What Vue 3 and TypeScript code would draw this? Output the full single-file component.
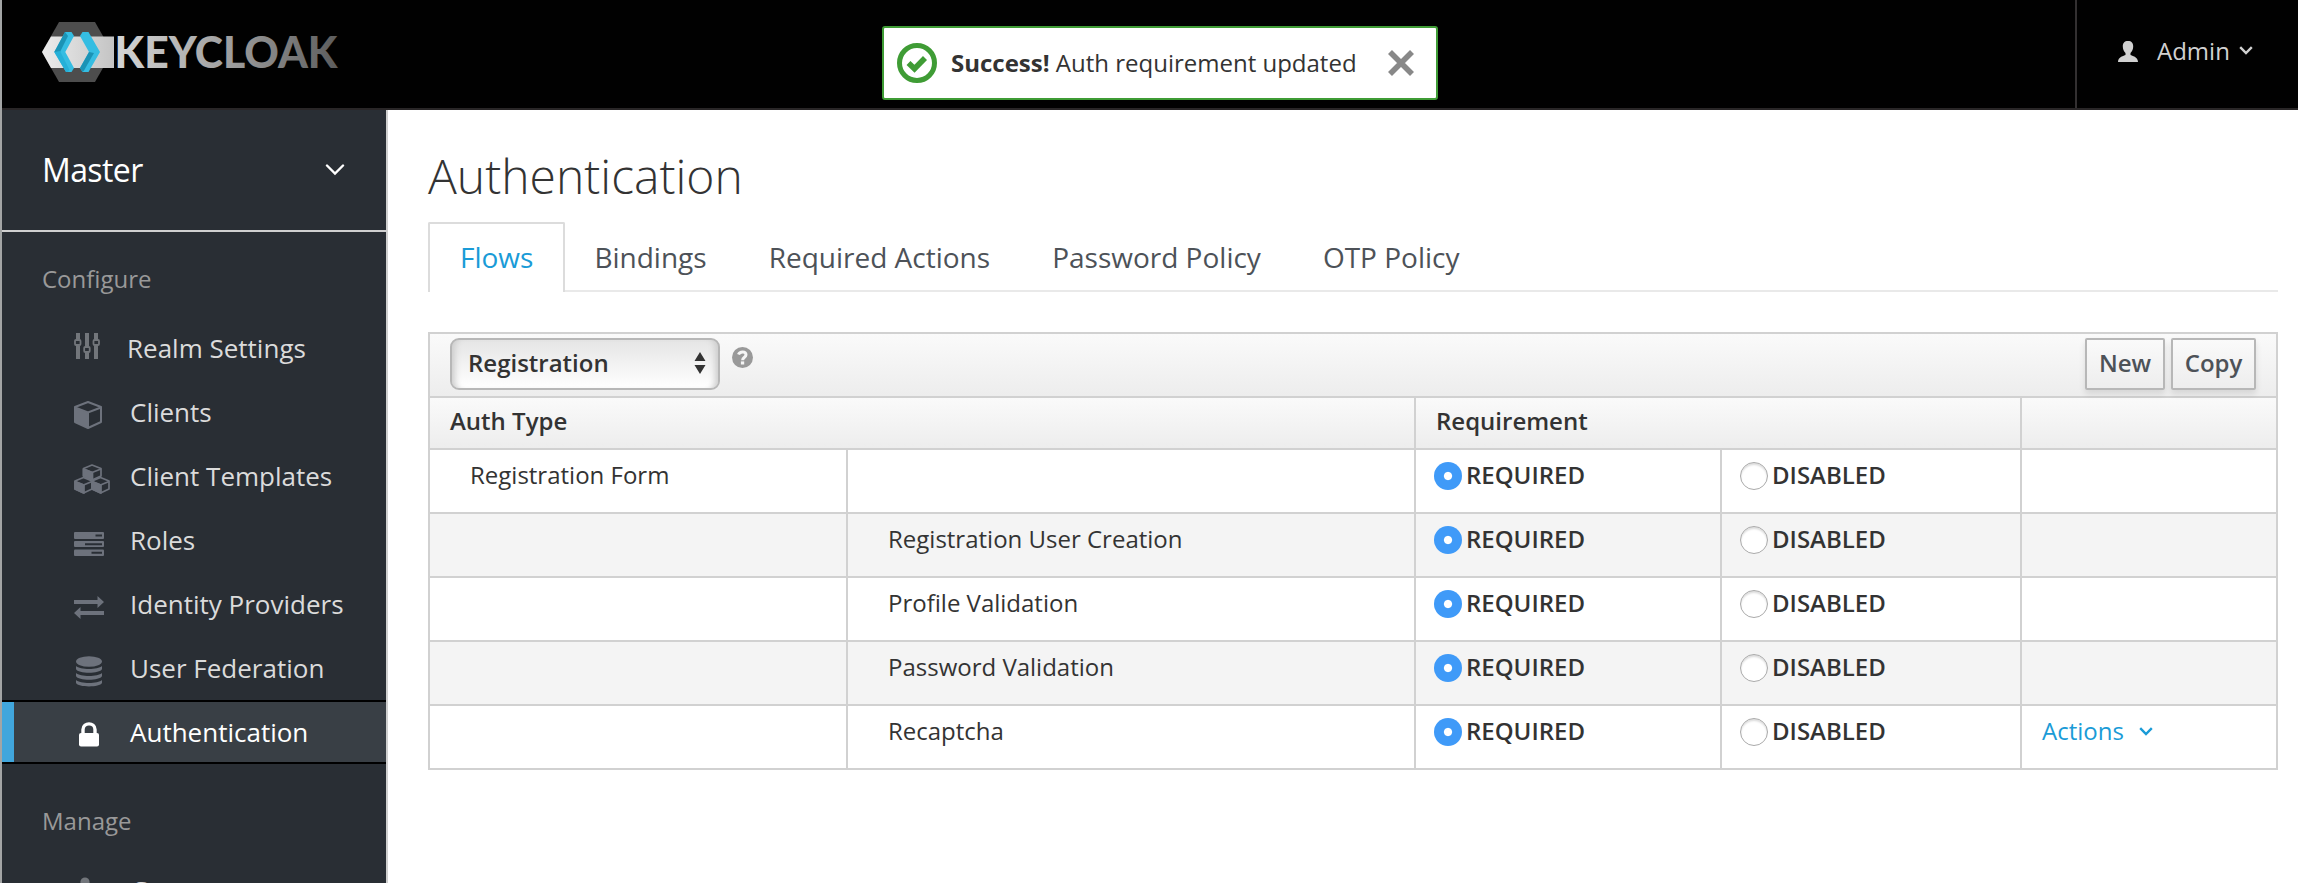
<script setup lang="ts">
interface NavItem {
  label: string
  icon: string
  active?: boolean
}

interface FlowRow {
  name: string
  level: number
  actions?: boolean
}

const configure: NavItem[] = [
  { label: 'Realm Settings', icon: 'sliders' },
  { label: 'Clients', icon: 'cube' },
  { label: 'Client Templates', icon: 'cubes' },
  { label: 'Roles', icon: 'tasks' },
  { label: 'Identity Providers', icon: 'exchange' },
  { label: 'User Federation', icon: 'database' },
  { label: 'Authentication', icon: 'lock', active: true },
]

const tabs: string[] = ['Flows', 'Bindings', 'Required Actions', 'Password Policy', 'OTP Policy']

const rows: FlowRow[] = [
  { name: 'Registration Form', level: 0 },
  { name: 'Registration User Creation', level: 1 },
  { name: 'Profile Validation', level: 1 },
  { name: 'Password Validation', level: 1 },
  { name: 'Recaptcha', level: 1, actions: true },
]
</script>

<template>
  <div class="page">
    <header class="topbar">
      <svg class="logo" width="300" height="62" viewBox="0 0 300 62">
        <defs>
          <linearGradient id="word" x1="0" x2="1" y1="0" y2="0">
            <stop offset="0" stop-color="#d6d6d6" />
            <stop offset="0.5" stop-color="#a0a0a0" />
            <stop offset="1" stop-color="#5c5c5c" />
          </linearGradient>
          <linearGradient id="band" x1="0" x2="1" y1="0" y2="0">
            <stop offset="0" stop-color="#ececec" />
            <stop offset="1" stop-color="#c4c4c4" />
          </linearGradient>
        </defs>
        <path d="M17 1H53L70 31L53 61H17L0 31Z" fill="#4d4d4d" />
        <path d="M9 15.500H72V47H9L0 31Z" fill="url(#band)" />
        <path d="M23 11H29.500L32 15L23.300 31L32 47L29.500 51H24L12.300 31Z" fill="#35bde2" />
        <path d="M23 11L26 15L18 31H12.300Z" fill="#1b93b5" />
        <path d="M12.300 31L18 30L27.500 49L26 51H24Z" fill="#25b0d8" />
        <path d="M40.500 11H46.500L58 31L46.500 51H40.500L38 47L47 31L38 15Z" fill="#35bde2" />
        <path d="M47 31L52 32L42 49.500L40.500 51L38 47Z" fill="#1b93b5" />
        <text class="logo-text" x="72.500" y="46.500" textLength="223" lengthAdjust="spacingAndGlyphs" fill="url(#word)">KEYCLOAK</text>
      </svg>
      <div class="user">
        <svg width="20" height="21" viewBox="0 0 20 21" fill="#d1d1d1">
          <path d="M10 0C13.500 0 15.300 2 15.200 5.500C15.200 8.500 14 10.500 12.500 12V14C14 15 20 15.500 20 21H0C0 15.500 6 15 7.500 14V12C6 10.500 4.800 8.500 4.800 5.500C4.700 2 6.500 0 10 0Z" />
        </svg>
        <span class="user-name">Admin</span>
        <svg class="user-caret" width="14" height="9" viewBox="0 0 14 9"><path d="M1.200 1.200L7 7L12.800 1.200" fill="none" stroke="#d1d1d1" stroke-width="2.400" /></svg>
      </div>
    </header>

    <div class="toast">
      <svg width="40" height="40" viewBox="0 0 40 40">
        <circle cx="20" cy="20" r="17.500" fill="none" stroke="#3f9c35" stroke-width="5" />
        <path d="M11.500 20L17.500 25.800L28 15" fill="none" stroke="#3f9c35" stroke-width="5.600" />
      </svg>
      <span class="toast-text"><strong>Success!</strong> Auth requirement updated</span>
      <svg class="toast-close" width="26" height="26" viewBox="0 0 26 26"><path d="M2 2L24 24M24 2L2 24" stroke="#888" stroke-width="5.600" /></svg>
    </div>

    <div class="body">
      <nav class="sidebar">
        <div class="realm">
          <span>Master</span>
          <svg width="20" height="12" viewBox="0 0 20 12"><path d="M2 1.500L10 9.500L18 1.500" fill="none" stroke="#fff" stroke-width="2.400" stroke-linecap="round" /></svg>
        </div>
        <h2 class="section">Configure</h2>
        <ul class="nav">
          <li v-for="item in configure" :key="item.label" :class="['nav-item', item.icon, { active: item.active }]">
            <span class="nav-icon">
              <svg v-if="item.icon === 'sliders'" width="26" height="26" viewBox="0 0 26 26" fill="none" stroke="#72767b">
                <path d="M4 0V6M4 13V26M13 0V13M13 20V26M22 0V6M22 13V26" stroke-width="4" />
                <rect x="1" y="7" width="5.500" height="5" rx="1" stroke-width="1.800" />
                <rect x="10.200" y="14" width="5.500" height="5" rx="1" stroke-width="1.800" />
                <rect x="19.500" y="7" width="5.500" height="5" rx="1" stroke-width="1.800" />
              </svg>
              <svg v-else-if="item.icon === 'cube'" width="28" height="28" viewBox="0 0 28 28">
                <path d="M14 1L27 6V21L14 27L1 21V6Z" fill="none" stroke="#6d727c" stroke-width="2" stroke-linejoin="round" />
                <path d="M1 6.500L14 11.500L27 6.500" fill="none" stroke="#6d727c" stroke-width="2" />
                <path d="M1 7L15 12V27.500L1 21Z" fill="#6d727c" />
              </svg>
              <svg v-else-if="item.icon === 'cubes'" width="36" height="30" viewBox="0 0 36 30" fill="none" stroke="#6d727c" stroke-width="1.700" stroke-linejoin="round">
                <path d="M18 1L27 4.500V12L18 16L9.500 12V4.500Z" /><path d="M9.500 5L18 8.500L27 5" /><path d="M9.500 5L18.500 8.500V16L9.500 12Z" fill="#6d727c" />
                <path d="M9.500 13.500L18 17V25L9.500 29L1 25V17Z" /><path d="M1 17.500L9.500 21L18 17.500" /><path d="M1 17.500L10 21V29L1 25Z" fill="#6d727c" />
                <path d="M26.500 13.500L35 17V25L26.500 29L18 25V17Z" /><path d="M18 17.500L26.500 21L35 17.500" /><path d="M18 17.500L27 21V29L18 25Z" fill="#6d727c" />
              </svg>
              <svg v-else-if="item.icon === 'tasks'" width="30" height="24" viewBox="0 0 30 24" fill="#6d727c">
                <rect width="30" height="7" rx="1" /><rect y="9" width="30" height="6" rx="1" /><rect y="17.500" width="30" height="6.500" rx="1" />
                <path d="M21.500 2.500H28V4.500H21.500ZM11 11.200H28V13.200H11ZM17.500 19.800H28V21.800H17.500Z" fill="#292e34" />
              </svg>
              <svg v-else-if="item.icon === 'exchange'" width="30" height="23" viewBox="0 0 30 23" fill="#6d727c">
                <path d="M0 4H23.500V0L30 6L23.500 12V8H0Z" /><path d="M30 15H6.500V11L0 17L6.500 23V19H30Z" />
              </svg>
              <svg v-else-if="item.icon === 'database'" width="26" height="31" viewBox="0 0 26 31" fill="#6d727c">
                <ellipse cx="13" cy="5.500" rx="13" ry="5.300" />
                <path d="M0 10C4 14 22 14 26 10V13C24 18 2 18 0 13Z" />
                <path d="M0 17C4 21 22 21 26 17V20C24 25 2 25 0 20Z" />
                <path d="M0 24C4 28 22 28 26 24V27C24 31.500 2 31.500 0 27Z" />
              </svg>
              <svg v-else width="20" height="25" viewBox="0 0 20 25">
                <path d="M4 12V7.500C4 0 16 0 16 7.500V12" fill="none" stroke="#fff" stroke-width="3.400" />
                <rect y="11" width="20" height="13.500" rx="2" fill="#fff" />
              </svg>
            </span>
            <span class="nav-label">{{ item.label }}</span>
          </li>
        </ul>
        <h2 class="section manage">Manage</h2>
        <ul class="nav">
          <li class="nav-item groups">
            <span class="nav-icon">
              <svg width="20" height="26" viewBox="0 0 20 26" fill="#72767b"><circle cx="10" cy="5" r="4.600" /><path d="M1 25C1 16 5 12 10 12S19 16 19 25Z" /></svg>
            </span>
            <span class="nav-label">Groups</span>
          </li>
        </ul>
      </nav>

      <main class="content">
        <h1>Authentication</h1>
        <div class="tabs">
          <a v-for="(tab, i) in tabs" :key="tab" :class="['tab', { current: i === 0 }]">{{ tab }}</a>
        </div>

        <section class="table">
          <div class="toolbar">
            <div class="select">
              <span>Registration</span>
              <svg width="12" height="22" viewBox="0 0 12 22" fill="#333"><path d="M6 0L11.500 9H0.500ZM0.500 13H11.500L6 22Z" /></svg>
            </div>
            <svg class="help" width="21" height="21" viewBox="0 0 21 21">
              <circle cx="10.500" cy="10.500" r="10.500" fill="#999" />
              <path d="M6.500 7.500C7.800 4 14 4 14 7.800C14 10.400 10.600 10 10.600 13.200" fill="none" stroke="#f5f5f5" stroke-width="3" />
              <rect x="8.900" y="14.400" width="3.300" height="3.100" fill="#f5f5f5" />
            </svg>
            <div class="buttons">
              <button class="new">New</button>
              <button class="copy">Copy</button>
            </div>
          </div>
          <div class="head">
            <div>Auth Type</div>
            <div>Requirement</div>
            <div></div>
          </div>
          <div v-for="row in rows" :key="row.name" class="row">
            <div class="first">{{ row.level === 0 ? row.name : '' }}</div>
            <div class="second">{{ row.level === 1 ? row.name : '' }}</div>
            <div class="choice"><i class="radio on"></i>REQUIRED</div>
            <div class="choice"><i class="radio"></i>DISABLED</div>
            <div class="actions">
              <template v-if="row.actions">
                <span>Actions</span>
                <svg width="14" height="9" viewBox="0 0 14 9"><path d="M1.200 1.200L7 7L12.800 1.200" fill="none" stroke="#1a9bd7" stroke-width="2.400" /></svg>
              </template>
            </div>
          </div>
        </section>
      </main>
    </div>
  </div>
</template>

<style>
body {
  background: #fff;
  overflow: hidden;
}
</style>

<style scoped>
* {
  box-sizing: border-box;
}
.page {
  position: relative;
  width: 2298px;
  height: 883px;
  overflow: hidden;
  display: flex;
  flex-direction: column;
  border-left: 2px solid #a3a5a5;
  font-family: 'Open Sans', sans-serif;
  font-size: 24px;
  line-height: 33px;
  color: #333;
}
.topbar {
  flex: none;
  height: 110px;
  display: flex;
  justify-content: space-between;
  background: #010101;
  border-bottom: 2px solid #292627;
}
.logo {
  margin: 21px 0 0 40px;
}
.logo-text {
  font-family: Lato, sans-serif;
  font-weight: 900;
  font-size: 43px;
}
.user {
  width: 223px;
  border-left: 2px solid #333031;
  display: flex;
  align-items: flex-start;
  padding: 34px 0 0 41px;
  color: #d1d1d1;
}
.user svg {
  flex: none;
  margin-top: 7px;
}
.user-name {
  margin-left: 19px;
  width: 66px;
  white-space: nowrap;
}
.user .user-caret {
  margin: 12px 0 0 16px;
}
.toast {
  position: absolute;
  left: 880px;
  top: 26px;
  width: 556px;
  height: 74px;
  display: flex;
  align-items: center;
  padding-left: 13px;
  background: #fff;
  border: 2px solid #3f9c35;
  border-radius: 3px;
}
.toast-text {
  margin-left: 14px;
  width: 405px;
  padding-bottom: 1px;
  white-space: nowrap;
}
.toast-close {
  margin-left: 32px;
}
.body {
  flex: 1;
  display: flex;
  min-height: 0;
}
.sidebar {
  flex: none;
  width: 386px;
  background: #292e34;
  border-right: 2px solid #cfcfcf;
  overflow: hidden;
}
.realm {
  height: 122px;
  border-bottom: 2px solid #d0d0d0;
  display: flex;
  align-items: center;
  justify-content: space-between;
  padding: 0 41px 1px 40px;
  font-size: 32px;
  letter-spacing: -0.6px;
  color: #fff;
}
.section {
  margin: 0;
  padding: 30px 0 21px 40px;
  font-size: 24px;
  font-weight: 400;
  color: #999;
}
.section.manage {
  padding-top: 40px;
}
.nav {
  list-style: none;
  margin: 0;
  padding: 0;
}
.nav-item {
  height: 64px;
  display: flex;
  align-items: center;
  padding-left: 72px;
  font-size: 26px;
  color: #dbdbdb;
}
.nav-icon {
  width: 56px;
  display: flex;
  padding-top: 6px;
}
.sliders .nav-icon {
  width: 53px;
  padding: 0 0 4px;
}
.lock .nav-icon {
  padding-left: 5px;
  padding-top: 4px;
}
.database .nav-icon {
  padding-left: 2px;
}
.tasks .nav-icon {
  padding-top: 8px;
}
.groups .nav-icon {
  padding: 0 0 0 1px;
}
.nav-label {
  white-space: nowrap;
}
.nav-item.active {
  background: #393f45;
  border-top: 2px solid #000;
  border-bottom: 2px solid #000;
  box-shadow: inset 12px 0 #41a6dc;
  color: #fff;
}
.content {
  flex: 1;
  min-width: 0;
  padding: 35px 20px 0 40px;
}
h1 {
  margin: 0 0 16px;
  font-size: 48px;
  line-height: 61px;
  font-weight: 300;
}
.tabs {
  height: 70px;
  display: flex;
  border-bottom: 2px solid #e9e9e9;
  font-size: 28px;
  color: #4d5258;
}
.tab {
  height: 70px;
  padding: 0 29px;
  border: 2px solid transparent;
  border-bottom: 0;
  line-height: 66px;
  white-space: nowrap;
}
.tab.current {
  padding: 0 30px;
  margin-right: -2px;
  background: #fff;
  border-color: #dcdcdc;
  border-radius: 2px 2px 0 0;
  color: #1a9bd7;
}
.table {
  margin-top: 40px;
  border: 2px solid #d1d1d1;
}
.toolbar {
  height: 64px;
  display: flex;
  align-items: flex-start;
  padding: 4px 20px 0;
  background: linear-gradient(#fafafa, #ededed);
  border-bottom: 2px solid #d1d1d1;
  font-weight: 600;
}
.select {
  width: 270px;
  height: 52px;
  display: flex;
  align-items: center;
  justify-content: space-between;
  padding: 0 12px 3px 16px;
  border: 2px solid #b7b7b7;
  border-radius: 9px;
  background: linear-gradient(#e5e5e5, #fff);
  box-shadow: inset 8px 0 6px -5px #ccc, inset -8px 0 6px -5px #ccc;
}
.help {
  margin: 9px 0 0 12px;
}
.buttons {
  margin-left: auto;
  display: flex;
  gap: 6px;
}
button {
  height: 52px;
  padding: 0 0 3px;
  border: 2px solid #b7b7b7;
  border-radius: 2px;
  background: linear-gradient(#fafafa, #ededed);
  box-shadow: 0 4px 6px rgba(3, 3, 3, 0.1);
  font: inherit;
  color: #4d5258;
}
.new {
  width: 80px;
}
.copy {
  width: 85px;
}
.head,
.row {
  display: grid;
  border-bottom: 2px solid #d1d1d1;
}
.head > div + div,
.row > div + div {
  border-left: 2px solid #d1d1d1;
}
.head {
  grid-template-columns: 984px 606px 1fr;
  height: 52px;
  background: linear-gradient(#fafafa, #ededed);
  font-weight: 600;
}
.head > div {
  padding: 6px 20px;
}
.row {
  grid-template-columns: 416px 568px 306px 300px 1fr;
  height: 64px;
}
.row:last-child {
  border-bottom: 0;
  height: 62px;
}
.row:nth-child(even) {
  background: #f4f4f4;
}
.row > div {
  padding-top: 8px;
}
.row > .first,
.row > .second {
  padding-left: 40px;
}
.row > .choice {
  display: flex;
  padding-left: 18px;
  font-weight: 600;
}
.radio {
  width: 28px;
  height: 28px;
  margin: 4px 4px 0 0;
  border-radius: 50%;
  border: 1px solid #aaa;
  background: #fff;
  box-shadow: inset 0 2px 2px #ddd;
}
.radio.on {
  border: 0;
  background: radial-gradient(circle, #fff 3.6px, #3f9af8 4.6px);
  box-shadow: none;
}
.row > .actions {
  padding-left: 20px;
  display: flex;
  color: #1a9bd7;
}
.actions svg {
  margin: 13px 0 0 15px;
}
</style>
